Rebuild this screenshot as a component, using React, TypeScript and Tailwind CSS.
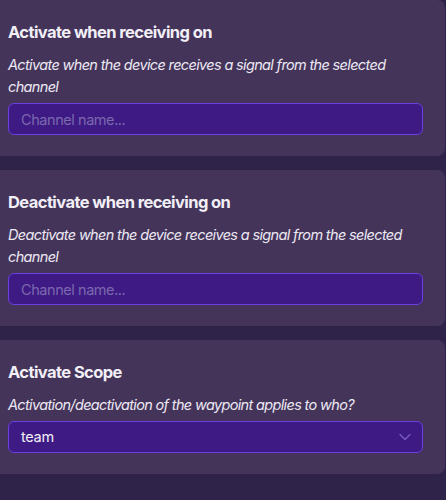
import React from 'react';

type FieldCardProps = {
  title: string;
  description: string;
  children: React.ReactNode;
};

function FieldCard({ title, description, children }: FieldCardProps) {
  return (
    <div className="w-[445px] rounded-r-lg bg-[#44345a] pl-2 pr-[22px] pt-5 pb-[21px]">
      <h3 className="text-[16.5px] font-bold leading-6 tracking-[-0.035em] text-[#f2eff7]">{title}</h3>
      <p className="mt-[10px] text-[14.5px] italic leading-[22px] tracking-[-0.045em] text-[#ece8f3]">
        {description}
      </p>
      <div className="mt-[5px]">{children}</div>
    </div>
  );
}

function ChannelInput() {
  return (
    <input
      type="text"
      placeholder="Channel name..."
      className="h-8 w-full rounded-md border border-[#6b3fe0] bg-[#3e1a84] px-3 text-[14.5px] tracking-[-0.03em] text-white placeholder:text-[#7b68ad] outline-none"
    />
  );
}

function ScopeSelect() {
  return (
    <div className="flex h-8 w-full items-center justify-between rounded-md border border-[#6b3fe0] bg-[#3e1a84] pl-3 pr-[11px]">
      <span className="text-[14.5px] tracking-[-0.02em] text-[#f2eff7]">team</span>
      <svg width="12" height="8" viewBox="0 0 12 8" fill="none">
        <path d="M1 1.5l5 5 5-5" stroke="#7a5cc4" strokeWidth="1.3" strokeLinecap="round" strokeLinejoin="round" />
      </svg>
    </div>
  );
}

export default function App() {
  return (
    <div
      className="flex h-[500px] w-[446px] flex-col gap-[14px] overflow-hidden bg-[#30234a]"
      style={{ fontFamily: 'Inter, "Noto Sans", sans-serif' }}
    >
      <FieldCard
        title="Activate when receiving on"
        description="Activate when the device receives a signal from the selected channel"
      >
        <ChannelInput />
      </FieldCard>
      <FieldCard
        title="Deactivate when receiving on"
        description="Deactivate when the device receives a signal from the selected channel"
      >
        <ChannelInput />
      </FieldCard>
      <FieldCard
        title="Activate Scope"
        description="Activation/deactivation of the waypoint applies to who?"
      >
        <ScopeSelect />
      </FieldCard>
    </div>
  );
}
